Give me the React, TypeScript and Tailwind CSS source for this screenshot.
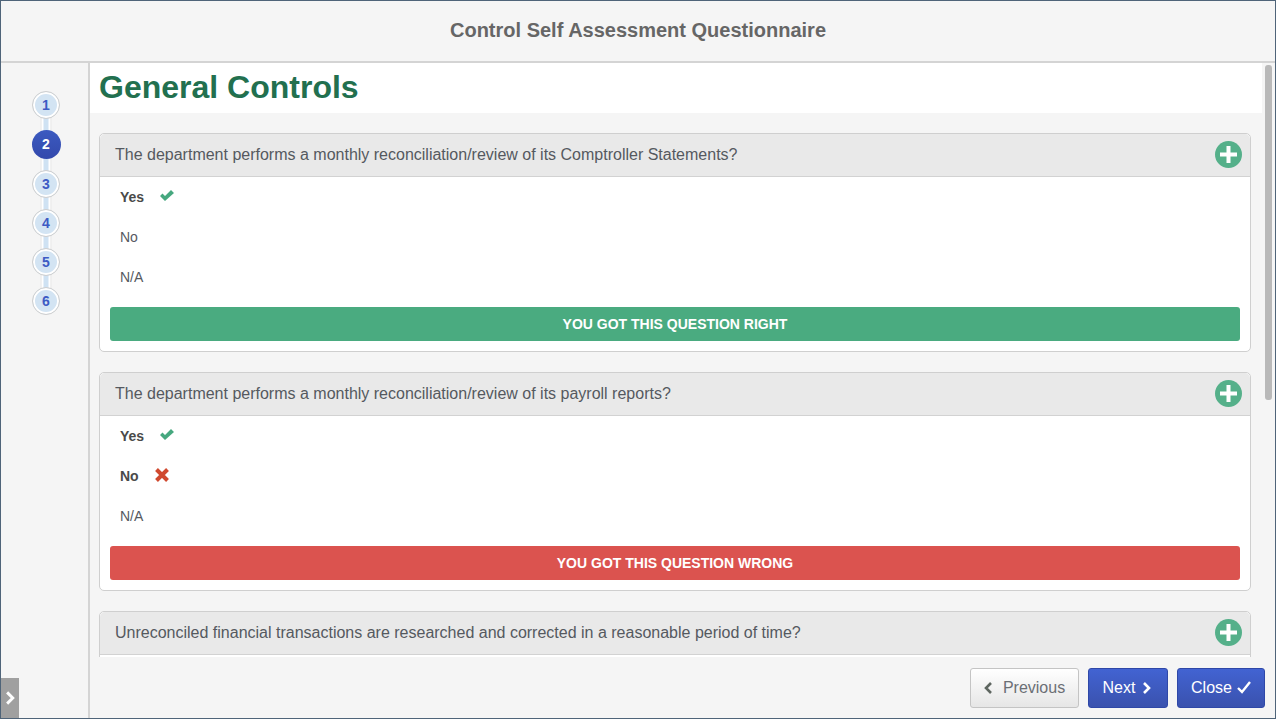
interface Question {
  text: string;
  answers: { label: string; picked?: 'right' | 'wrong' }[];
  result?: 'right' | 'wrong';
}

const questions: Question[] = [
  {
    text: 'The department performs a monthly reconciliation/review of its Comptroller Statements?',
    answers: [{ label: 'Yes', picked: 'right' }, { label: 'No' }, { label: 'N/A' }],
    result: 'right',
  },
  {
    text: 'The department performs a monthly reconciliation/review of its payroll reports?',
    answers: [{ label: 'Yes', picked: 'right' }, { label: 'No', picked: 'wrong' }, { label: 'N/A' }],
    result: 'wrong',
  },
  {
    // only the header of this one is above the footer
    text: 'Unreconciled financial transactions are researched and corrected in a reasonable period of time?',
    answers: [],
  },
];

function Tick({ className }: { className?: string }) {
  return (
    <svg width="14" height="11" viewBox="0 0 14 11" className={className} fill="currentColor">
      <polygon points="0,6 2.5,3.5 5,6 11,0 14,3 5,11" />
    </svg>
  );
}

function Cross({ className }: { className?: string }) {
  return (
    <svg width="14" height="14" viewBox="0 0 14 14" className={className} stroke="currentColor" strokeWidth="4" fill="none">
      <path d="M1.5 1.5 12.5 12.5M12.5 1.5 1.5 12.5" />
    </svg>
  );
}

function PlusMark() {
  return (
    <svg width="17" height="17" viewBox="0 0 17 17" fill="#fff">
      <rect x="6.5" y="0" width="4" height="17" />
      <rect x="0" y="6.5" width="17" height="4" />
    </svg>
  );
}

function Chevron({ left, className }: { left?: boolean; className?: string }) {
  return (
    <svg width="8" height="12" viewBox="0 0 8 12" className={className} fill="none" stroke="currentColor" strokeWidth="2.6">
      <path d={left ? 'M7 1 2 6l5 5' : 'M1 1l5 5-5 5'} />
    </svg>
  );
}

function Stepper() {
  return (
    <div className="relative mt-[29px] flex flex-col items-center gap-[13px]">
      <div className="absolute top-2 bottom-2 left-1/2 w-[11px] -translate-x-1/2 border-x border-[#e4e4e4] bg-white" />
      <div className="absolute top-2 bottom-2 left-1/2 w-[5px] -translate-x-1/2 bg-[#cfe2f3]" />
      {[1, 2, 3, 4, 5, 6].map((n) =>
        n === 2 ? (
          <div
            key={n}
            className="relative -my-px flex h-[29px] w-[29px] items-center justify-center rounded-full bg-gradient-to-b from-[#3b5ac0] to-[#3349ac] text-[14px] font-bold text-white"
          >
            {n}
          </div>
        ) : (
          <div
            key={n}
            className="relative -my-px flex h-[28px] w-[28px] items-center justify-center rounded-full border border-[#cfcfcf] bg-[#d3e4f3] text-[14px] font-bold text-[#3d5bc4] shadow-[inset_0_0_0_2px_#fff]"
          >
            {n}
          </div>
        ),
      )}
    </div>
  );
}

function QuestionCard({ q }: { q: Question }) {
  return (
    <div className="mb-5 rounded-[5px] border border-[#cfcfcf] bg-white">
      <div className="flex h-[43px] items-center justify-between rounded-t-[5px] border-b border-[#d2d2d2] bg-[#e9e9e9] pr-[8px] pl-[15px] text-[16px] text-[#55595f]">
        <span>{q.text}</span>
        <span className="mt-[-1px] flex h-[27px] w-[27px] items-center justify-center rounded-full bg-[#55b08a]">
          <PlusMark />
        </span>
      </div>
      <div className={`px-[20px] ${q.answers.length ? '' : 'h-[120px]'}`}>
        {q.answers.map((a) => (
          <div key={a.label} className="flex h-[40px] items-center text-[14px] text-[#55595f]">
            <span className={a.picked ? 'font-bold text-[#4a4a4a]' : ''}>{a.label}</span>
            {a.picked === 'right' && <Tick className="mb-[3px] ml-[16px] text-[#46a87f]" />}
            {a.picked === 'wrong' && <Cross className="mb-[3px] ml-[16px] text-[#d0492f]" />}
          </div>
        ))}
      </div>
      {q.result && (
        <div className="px-[10px] pt-[10px] pb-[10px]">
          <div
            className={`flex h-[34px] items-center justify-center rounded-[3px] text-[14px] font-bold text-white ${
              q.result === 'right' ? 'bg-[#4aab80]' : 'bg-[#db534f]'
            }`}
          >
            {q.result === 'right' ? 'YOU GOT THIS QUESTION RIGHT' : 'YOU GOT THIS QUESTION WRONG'}
          </div>
        </div>
      )}
    </div>
  );
}

export default function App() {
  return (
    <div className="flex h-[719px] w-[1276px] flex-col overflow-hidden border border-[#4f6479] bg-[#f5f5f5] font-['Liberation_Sans',Arial,sans-serif]">
      <header className="flex h-[62px] shrink-0 items-center justify-center border-b-2 border-[#d4d4d4] pb-[2px] text-[20px] font-bold text-[#666666]">
        Control Self Assessment Questionnaire
      </header>

      <div className="flex min-h-0 flex-1">
        <aside className="relative flex w-[89px] shrink-0 flex-col items-center border-r-2 border-[#d4d4d4] pl-[3px]">
          <Stepper />
          <div className="absolute bottom-0 left-0 flex h-[40px] w-[18px] items-center justify-center bg-[#a0a0a0]">
            <Chevron className="h-[14px] w-[9px] text-white" />
          </div>
        </aside>

        <main className="relative flex min-w-0 flex-1 flex-col">
          <div className="min-h-0 flex-1 overflow-hidden">
            <div className="mr-[13px] flex h-[50px] items-center bg-white pb-[2px] pl-[9px] text-[32px] leading-none font-bold text-[#22704f]">
              General Controls
            </div>
            <div className="mt-[20px] mr-[24px] ml-[9px]">
              {questions.map((q) => (
                <QuestionCard key={q.text} q={q} />
              ))}
            </div>
          </div>

          <div className="absolute top-[2px] right-[3px] h-[335px] w-[7px] rounded-[3px] bg-[#b9b9b9]" />

          <footer className="flex h-[61px] shrink-0 items-start justify-end gap-[9px] bg-[#f5f5f5] pt-[11px] pr-[10px] text-[16px]">
            <button className="flex h-[40px] w-[109px] items-center justify-center rounded-[3px] border border-[#c4c4c4] bg-gradient-to-b from-white to-[#e6e6e6] text-[#6b6f75]">
              <Chevron left className="mr-[11px] text-[#5e6660]" />
              Previous
            </button>
            <button className="flex h-[40px] w-[80px] items-center justify-center rounded-[3px] border border-[#2f48a8] bg-gradient-to-b from-[#4263d2] to-[#3a52ae] pr-[2px] text-white">
              Next
              <Chevron className="ml-[8px]" />
            </button>
            <button className="flex h-[40px] w-[88px] items-center justify-center rounded-[3px] border border-[#2f48a8] bg-gradient-to-b from-[#4263d2] to-[#3a52ae] text-white">
              Close
              <svg width="14" height="13" viewBox="0 0 14 13" fill="none" stroke="currentColor" strokeWidth="2.4" className="mb-[2px] ml-[5px]">
                <path d="M1 7l4 4 8-10" />
              </svg>
            </button>
          </footer>
        </main>
      </div>
    </div>
  );
}
